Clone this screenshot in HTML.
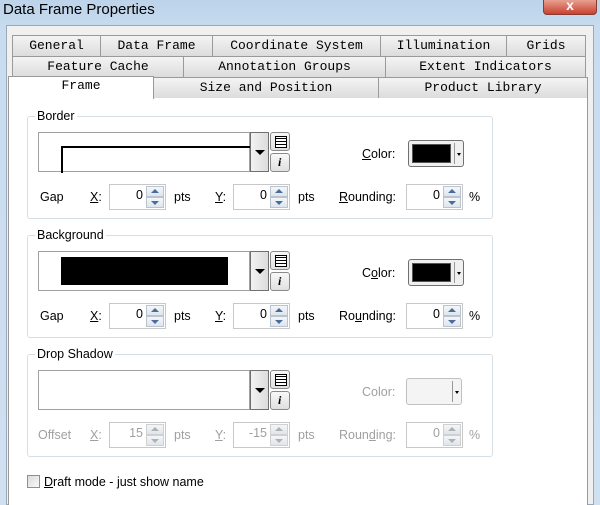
<!DOCTYPE html><html><head><style>
*{margin:0;padding:0;box-sizing:border-box}
body{width:600px;height:505px;overflow:hidden;background:linear-gradient(#bcd3ea,#c9dcef 30px,#cfe0f1);font-family:"Liberation Sans",sans-serif;font-size:12px;position:relative}
.a{position:absolute}
.tab{position:absolute;height:21px;border:1px solid #9a9a9a;border-bottom:none;background:linear-gradient(#f4f4f4,#dcdcdc);font-family:"Liberation Mono",monospace;font-size:13px;text-align:center;line-height:20px;color:#000}
.grp{position:absolute;left:27px;width:466px;height:103px;border:1px solid #d5dfe5;border-radius:3px}
.gl{position:absolute;left:7px;top:-8px;background:#fff;padding:0 2px;font-size:12.5px}
.prev{position:absolute;left:10px;top:15px;width:212px;height:40px;border:1px solid #a0a0a0;background:#fff}
.dd{position:absolute;left:222px;top:15px;width:19px;height:40px;border:1px solid #707070;background:linear-gradient(90deg,#f2f2f2,#dcdcdc)}
.dd:after{content:"";position:absolute;left:4px;top:17px;border-left:5px solid transparent;border-right:5px solid transparent;border-top:5px solid #000}
.sb{position:absolute;left:242px;width:20px;height:19px;border:1px solid #8a8a8a;border-radius:3px;background:linear-gradient(#f8f8f8,#e0e0e0)}
.sb.l:after{content:"";position:absolute;left:4px;top:3px;width:10px;height:10px;border:1px solid #000;background:repeating-linear-gradient(#fff 0 1px,#000 1px 2px,#fff 2px 3px)}
.sb.i:after{content:"i";position:absolute;left:7px;top:1px;font-style:italic;font-weight:bold;font-size:12px;font-family:"Liberation Serif",serif}
.lbl{position:absolute;font-size:12.5px}
.sp{position:absolute;width:57px;height:26px;border:1px solid #c8c8c8;background:#fff}
.sp span{position:absolute;right:22px;top:3px;font-size:12.5px}
.ar{position:absolute;right:1px;width:18px;height:11px;border:1px solid #b8c4d0;background:linear-gradient(#f4f6f9,#dfe5ec)}
.ar.u:after{content:"";position:absolute;left:4px;top:2px;border-left:4px solid transparent;border-right:4px solid transparent;border-bottom:4px solid #4a6c9b}
.ar.d:after{content:"";position:absolute;left:4px;top:3px;border-left:4px solid transparent;border-right:4px solid transparent;border-top:4px solid #4a6c9b}
.dis .ar.u:after{border-bottom-color:#b0b0b0}.dis .ar.d:after{border-top-color:#b0b0b0}
.col{position:absolute;width:56px;height:27px;border:1px solid #707070;border-radius:3px;background:#f0f0f0}
.col i{position:absolute;left:3px;top:3px;width:39px;height:19px;background:#000;border:1px solid #555}
.col:before{content:"";position:absolute;left:45px;top:2px;width:1px;height:21px;background:#999}
.col:after{content:"";position:absolute;left:48px;top:12px;border-left:2px solid transparent;border-right:2px solid transparent;border-top:3px solid #000}
.dis{color:#a0a0a0}
</style></head><body>
<div class="a" style="left:3px;top:1px;font-size:15px;color:#000">Data Frame Properties</div>
<div class="a" style="left:543px;top:0;width:54px;height:15px;border:1px solid #8a3a30;border-top:none;border-radius:0 0 4px 4px;background:linear-gradient(#e8a090,#c8412e);color:#fff;text-align:center;font-weight:bold;line-height:10px;font-size:14px">x</div>
<div class="a" style="left:6px;top:25px;width:588px;height:480px;background:#f0f0f0;border:1px solid #9aa8b8"></div>
<div class="a" style="left:8px;top:97px;width:580px;height:408px;background:#fff;border:1px solid #9a9a9a;border-bottom:none"></div>
<div class="tab" style="left:12px;top:35px;width:89px">General</div>
<div class="tab" style="left:100px;top:35px;width:113px">Data Frame</div>
<div class="tab" style="left:212px;top:35px;width:169px">Coordinate System</div>
<div class="tab" style="left:380px;top:35px;width:127px">Illumination</div>
<div class="tab" style="left:506px;top:35px;width:80px">Grids</div>
<div class="tab" style="left:12px;top:56px;width:172px">Feature Cache</div>
<div class="tab" style="left:183px;top:56px;width:203px">Annotation Groups</div>
<div class="tab" style="left:385px;top:56px;width:201px">Extent Indicators</div>
<div class="tab" style="left:153px;top:77px;width:226px">Size and Position</div>
<div class="tab" style="left:378px;top:77px;width:210px">Product Library</div>
<div class="tab" style="left:8px;top:76px;width:146px;height:23px;background:#fff;line-height:18px">Frame</div>

<div class="grp" style="top:116px"><div class="gl">Border</div>
<div class="prev"><div class="a" style="left:22px;top:13px;width:190px;height:27px;border-left:2px solid #000;border-top:2px solid #000"></div></div>
<div class="dd"></div><div class="sb l" style="top:15px"></div><div class="sb i" style="top:36px"></div>
<div class="lbl" style="left:334px;top:30px"><u>C</u>olor:</div><div class="col" style="left:380px;top:23px"><i></i></div>
<div class="lbl" style="left:12px;top:73px">Gap</div><div class="lbl" style="left:62px;top:73px"><u>X</u>:</div>
<div class="sp" style="left:81px;top:67px"><span>0</span><div class="ar u" style="top:1px"></div><div class="ar d" style="top:12px"></div></div>
<div class="lbl" style="left:146px;top:73px">pts</div><div class="lbl" style="left:187px;top:73px"><u>Y</u>:</div>
<div class="sp" style="left:205px;top:67px"><span>0</span><div class="ar u" style="top:1px"></div><div class="ar d" style="top:12px"></div></div>
<div class="lbl" style="left:270px;top:73px">pts</div><div class="lbl" style="left:311px;top:73px"><u>R</u>ounding:</div>
<div class="sp" style="left:378px;top:67px"><span>0</span><div class="ar u" style="top:1px"></div><div class="ar d" style="top:12px"></div></div>
<div class="lbl" style="left:441px;top:73px">%</div></div>

<div class="grp" style="top:235px"><div class="gl">Background</div>
<div class="prev"><div class="a" style="left:22px;top:5px;width:167px;height:28px;background:#000"></div></div>
<div class="dd"></div><div class="sb l" style="top:15px"></div><div class="sb i" style="top:36px"></div>
<div class="lbl" style="left:334px;top:30px">C<u>o</u>lor:</div><div class="col" style="left:380px;top:23px"><i></i></div>
<div class="lbl" style="left:12px;top:73px">Gap</div><div class="lbl" style="left:62px;top:73px"><u>X</u>:</div>
<div class="sp" style="left:81px;top:67px"><span>0</span><div class="ar u" style="top:1px"></div><div class="ar d" style="top:12px"></div></div>
<div class="lbl" style="left:146px;top:73px">pts</div><div class="lbl" style="left:187px;top:73px"><u>Y</u>:</div>
<div class="sp" style="left:205px;top:67px"><span>0</span><div class="ar u" style="top:1px"></div><div class="ar d" style="top:12px"></div></div>
<div class="lbl" style="left:270px;top:73px">pts</div><div class="lbl" style="left:311px;top:73px">Ro<u>u</u>nding:</div>
<div class="sp" style="left:378px;top:67px"><span>0</span><div class="ar u" style="top:1px"></div><div class="ar d" style="top:12px"></div></div>
<div class="lbl" style="left:441px;top:73px">%</div></div>

<div class="grp" style="top:354px"><div class="gl">Drop Shadow</div>
<div class="prev"></div>
<div class="dd"></div><div class="sb l" style="top:15px"></div><div class="sb i" style="top:36px"></div>
<div class="lbl dis" style="left:334px;top:30px">Color:</div><div class="col dis" style="left:378px;top:23px;border-color:#c0c0c0;background:#f4f4f4"></div>
<div class="lbl dis" style="left:10px;top:73px">Offset</div><div class="lbl dis" style="left:62px;top:73px"><u>X</u>:</div>
<div class="sp dis" style="left:81px;top:67px"><span>15</span><div class="ar u" style="top:1px;border-color:#d0d0d0"></div><div class="ar d" style="top:12px;border-color:#d0d0d0"></div></div>
<div class="lbl dis" style="left:146px;top:73px">pts</div><div class="lbl dis" style="left:187px;top:73px"><u>Y</u>:</div>
<div class="sp dis" style="left:205px;top:67px"><span>-15</span><div class="ar u" style="top:1px;border-color:#d0d0d0"></div><div class="ar d" style="top:12px;border-color:#d0d0d0"></div></div>
<div class="lbl dis" style="left:270px;top:73px">pts</div><div class="lbl dis" style="left:311px;top:73px">Roun<u>d</u>ing:</div>
<div class="sp dis" style="left:378px;top:67px"><span>0</span><div class="ar u" style="top:1px;border-color:#d0d0d0"></div><div class="ar d" style="top:12px;border-color:#d0d0d0"></div></div>
<div class="lbl dis" style="left:441px;top:73px">%</div></div>

<div class="a" style="left:27px;top:475px;width:13px;height:13px;border:1px solid #8e8f8f;background:linear-gradient(135deg,#dcdcdc,#f8f8f8)"></div>
<div class="lbl" style="left:44px;top:475px"><u>D</u>raft mode - just show name</div>
</body></html>
